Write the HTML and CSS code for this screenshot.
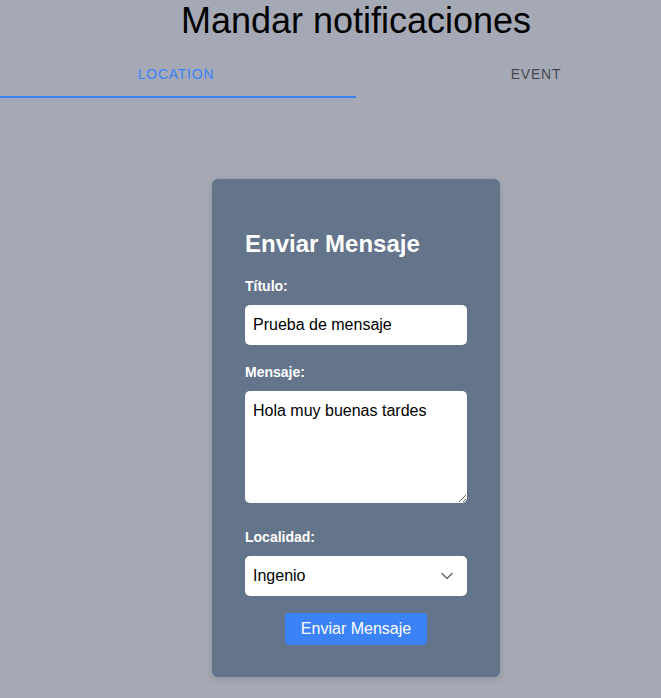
FILE: index.html
```html
<!DOCTYPE html>
<html lang="es">
<head>
<meta charset="utf-8">
<title>Mandar notificaciones</title>
<link rel="stylesheet" href="styles.css">
</head>
<body>
<div class="page">
  <h1 class="title">Mandar notificaciones</h1>
  <div class="tabs">
    <div class="tab tab-active">Location</div>
    <div class="tab">Event</div>
  </div>
  <div class="card">
    <h2 class="card-title">Enviar Mensaje</h2>
    <form class="form">
      <label class="label" for="titulo">Título:</label>
      <input class="field" id="titulo" type="text" value="Prueba de mensaje">
      <label class="label" for="mensaje">Mensaje:</label>
      <textarea class="field area" id="mensaje">Hola muy buenas tardes</textarea>
      <label class="label" for="localidad">Localidad:</label>
      <div class="select-wrap">
        <select class="field select" id="localidad">
          <option>Ingenio</option>
        </select>
        <svg class="chevron" width="12" height="8" viewBox="0 0 12 8"><path d="M1 1.5 L6 6.5 L11 1.5" fill="none" stroke="#6b7280" stroke-width="1.6" stroke-linecap="round" stroke-linejoin="round"/></svg>
      </div>
      <div class="actions">
        <button class="btn" type="button">Enviar Mensaje</button>
      </div>
    </form>
  </div>
</div>
</body>
</html>
```

FILE: styles.css
```css
* { box-sizing: border-box; }
html, body {
  margin: 0;
  padding: 0;
  background: #a4a9b5;
  font-family: "Liberation Sans", Arial, sans-serif;
  overflow: hidden;
}
.page {
  width: 712px;
  min-height: 698px;
  background: #a4a9b5;
}
.title {
  margin: 0 0 9px;
  font-size: 36px;
  font-weight: normal;
  line-height: 41px;
  text-align: center;
  color: #000;
}
.tabs {
  display: flex;
  height: 48px;
}
.tab {
  flex: 1;
  display: flex;
  align-items: center;
  justify-content: center;
  font-size: 14px;
  letter-spacing: 0.75px;
  text-transform: uppercase;
  color: rgba(0, 0, 0, 0.6);
}
.tab-active {
  color: #3b82f6;
  border-bottom: 2px solid #3b82f6;
  padding-top: 2px;
  padding-right: 4px;
}
.tab:last-child {
  padding-left: 4px;
}
.card {
  width: 288px;
  margin: 81px auto 0;
  padding: 32px 33px 32px;
  background: #64748b;
  border-radius: 6px;
  box-shadow: 0 2px 6px rgba(0, 0, 0, 0.15);
}
.card-title {
  margin: 19px 0 20px;
  font-size: 24px;
  line-height: 28px;
  font-weight: bold;
  color: #fff;
}
.form {
  display: flex;
  flex-direction: column;
}
.label {
  display: block;
  font-size: 14px;
  line-height: 16px;
  font-weight: bold;
  color: #fff;
  margin-bottom: 11px;
}
.field {
  display: block;
  width: 222px;
  height: 40px;
  margin: 0 0 19px;
  padding: 8px;
  border: none;
  border-radius: 5px;
  background: #fff;
  font-family: "Liberation Sans", Arial, sans-serif;
  font-size: 16px;
  line-height: 24px;
  color: #000;
  outline: none;
}
.area {
  height: 112px;
  margin-bottom: 26px;
  resize: vertical;
}
.select-wrap {
  position: relative;
  width: 222px;
  margin-bottom: 17px;
}
.select {
  margin: 0;
  -webkit-appearance: none;
  appearance: none;
  padding: 8px 8px;
}
.chevron {
  position: absolute;
  left: 196px;
  top: 16px;
}
.actions {
  display: flex;
  justify-content: center;
}
.btn {
  height: 32px;
  padding: 0 16px;
  border: none;
  border-radius: 4px;
  background: #3b82f6;
  color: #fff;
  font-family: "Liberation Sans", Arial, sans-serif;
  font-size: 16px;
}
```
